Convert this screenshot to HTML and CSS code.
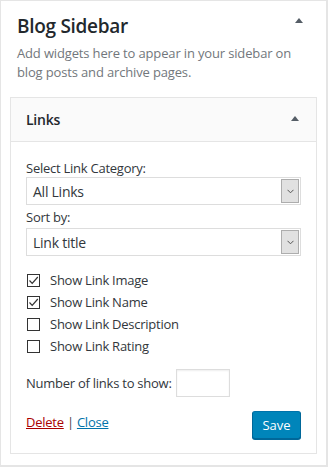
FILE: index.html
```html
<!DOCTYPE html>
<html lang="en">
<head>
  <meta charset="UTF-8">
  <title>Blog Sidebar</title>
  <link rel="stylesheet" href="styles.css">
</head>
<body>
  <div class="sidebar">
    <div class="sidebar-head">
      <h2 class="sidebar-title">Blog Sidebar</h2>
      <span class="toggle-arrow"></span>
    </div>
    <p class="sidebar-desc">Add widgets here to appear in your sidebar on blog posts and archive pages.</p>

    <!-- Links widget -->
    <div class="widget">
      <div class="widget-top">
        <h3 class="widget-title">Links</h3>
        <span class="toggle-arrow"></span>
      </div>
      <div class="widget-inside">
        <label class="field-label">Select Link Category:</label>
        <div class="select">
          <span class="select-value">All Links</span>
          <span class="select-arrow">
            <svg width="7" height="5" viewBox="0 0 7 5"><path d="M0.5 0.8 L3.5 3.8 L6.5 0.8" fill="none" stroke="#555" stroke-width="1"/></svg>
          </span>
        </div>
        <label class="field-label sort-label">Sort by:</label>
        <div class="select select-sort">
          <span class="select-value">Link title</span>
          <span class="select-arrow">
            <svg width="7" height="5" viewBox="0 0 7 5"><path d="M0.5 0.8 L3.5 3.8 L6.5 0.8" fill="none" stroke="#555" stroke-width="1"/></svg>
          </span>
        </div>

        <ul class="check-list">
          <li><span class="checkbox checked"><svg width="11" height="11" viewBox="0 0 11 11"><path d="M1.5 5.5 L4.2 8.3 L9.8 2" fill="none" stroke="#333" stroke-width="1.2"/></svg></span>Show Link Image</li>
          <li><span class="checkbox checked"><svg width="11" height="11" viewBox="0 0 11 11"><path d="M1.5 5.5 L4.2 8.3 L9.8 2" fill="none" stroke="#333" stroke-width="1.2"/></svg></span>Show Link Name</li>
          <li><span class="checkbox"></span>Show Link Description</li>
          <li><span class="checkbox"></span>Show Link Rating</li>
        </ul>

        <div class="number-row">
          <span>Number of links to show:</span>
          <span class="number-input"></span>
        </div>

        <div class="widget-actions">
          <div class="action-links">
            <a href="#" class="link-delete">Delete</a> | <a href="#" class="link-close">Close</a>
          </div>
          <button class="save-button">Save</button>
        </div>
      </div>
    </div>
  </div>
</body>
</html>
```

FILE: styles.css
```css
* {
  margin: 0;
  padding: 0;
  box-sizing: border-box;
}

body {
  font-family: "Open Sans", "Noto Sans", sans-serif;
  font-size: 13px;
  letter-spacing: -0.25px;
  color: #444;
  background: #fff;
}

.sidebar {
  width: 328px;
  border: 1px solid #e5e5e5;
  border-right-width: 2px;
  border-bottom-width: 2px;
  padding: 0 9px 11px 9px;
  background: #fff;
}

.sidebar-head {
  display: flex;
  align-items: center;
  justify-content: space-between;
  padding: 14px 14px 0 7px;
}

.sidebar-title {
  font-size: 19px;
  line-height: 22px;
  font-weight: 600;
  color: #23282d;
  letter-spacing: -0.3px;
}

.toggle-arrow {
  width: 0;
  height: 0;
  border-left: 4px solid transparent;
  border-right: 4px solid transparent;
  border-bottom: 5px solid #555d66;
}

.sidebar-head .toggle-arrow {
  margin-top: -11px;
}

.sidebar-desc {
  padding: 7px 7px 0 7px;
  height: 60px;
  line-height: 19px;
  color: #72777c;
  letter-spacing: -0.15px;
}

.widget {
  border: 1px solid #e5e5e5;
  background: #fff;
}

.widget-top {
  display: flex;
  align-items: center;
  justify-content: space-between;
  height: 44px;
  padding: 0 17px 0 15px;
  background: #fafafa;
  border-bottom: 1px solid #e5e5e5;
}

.widget-title {
  font-size: 14px;
  font-weight: 600;
  color: #23282d;
}

.widget-top .toggle-arrow {
  margin-top: -2px;
}

.widget-inside {
  padding: 18px 15px 14px 15px;
}

.field-label {
  display: block;
  line-height: 17px;
  color: #32373c;
}

.sort-label {
  margin-top: 4px;
  margin-bottom: 2px;
}

.select {
  display: flex;
  align-items: center;
  height: 28px;
  border: 1px solid #ddd;
  padding: 1px;
  font-size: 14px;
  color: #32373c;
}

.select-value {
  flex: 1;
  padding-left: 5px;
}

.select-arrow {
  display: flex;
  align-items: center;
  justify-content: center;
  width: 18px;
  height: 100%;
  background: #e1e1e1;
  border: 1px solid #adadad;
}

.check-list {
  list-style: none;
  margin-top: 13px;
}

.check-list li {
  display: flex;
  align-items: center;
  height: 22px;
  color: #32373c;
}

.checkbox {
  display: flex;
  align-items: center;
  justify-content: center;
  width: 13px;
  height: 13px;
  margin: 0 10px 0 1px;
  border: 1px solid #333;
  background: #fff;
}

.number-row {
  display: flex;
  align-items: center;
  margin-top: 12px;
  color: #32373c;
}

.number-input {
  width: 54px;
  height: 28px;
  margin-left: 4px;
  border: 1px solid #ddd;
  box-shadow: inset 0 1px 2px rgba(0, 0, 0, 0.07);
}

.widget-actions {
  display: flex;
  justify-content: space-between;
  align-items: flex-start;
  margin-top: 14px;
}

.action-links {
  margin-top: 2px;
}

.action-links a {
  text-decoration: underline;
}

.link-delete {
  color: #a00;
}

.link-close {
  color: #0073aa;
}

.save-button {
  width: 49px;
  height: 28px;
  background: #0085ba;
  border: 1px solid #0073aa;
  border-color: #0073aa #006799 #006799;
  border-radius: 3px;
  box-shadow: 0 1px 0 #006799;
  color: #fff;
  font-family: inherit;
  font-size: 13px;
  letter-spacing: 0;
}
```
